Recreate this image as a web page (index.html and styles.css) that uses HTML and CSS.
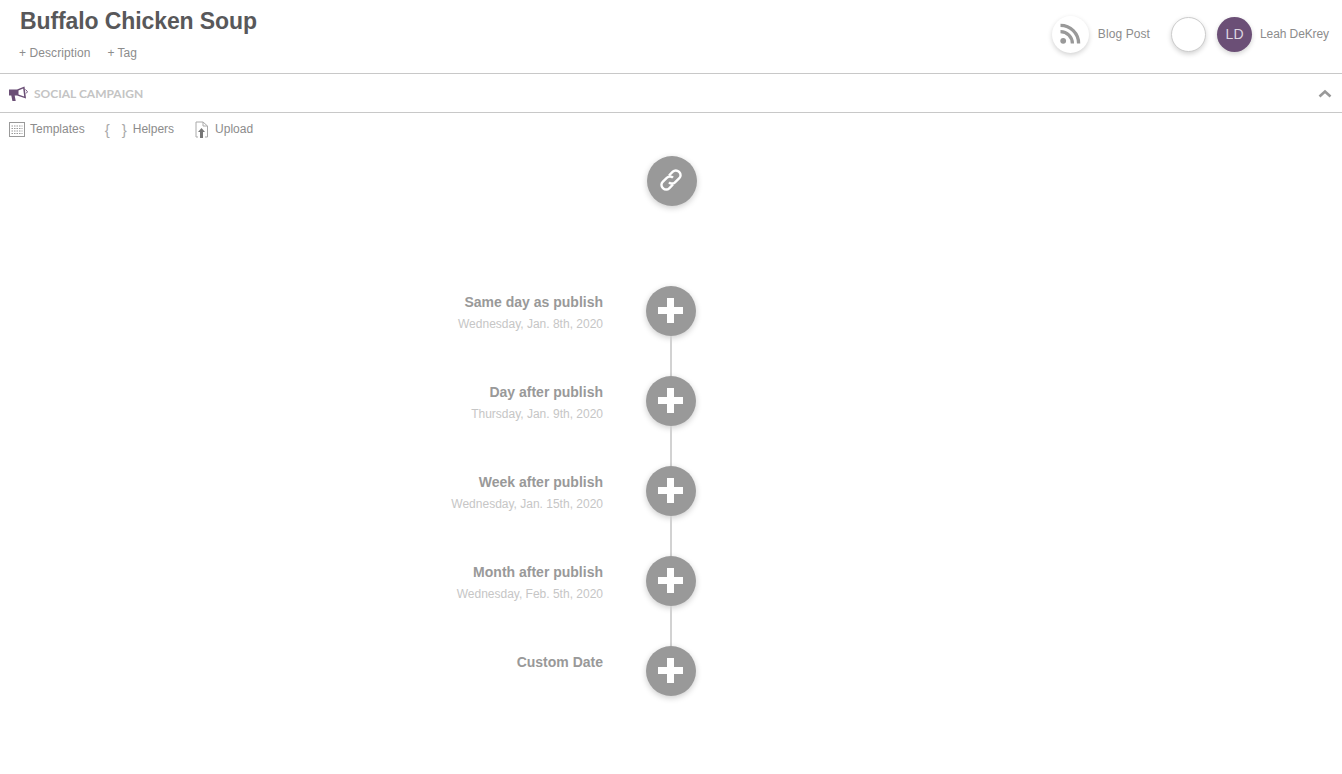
FILE: index.html
```html
<!DOCTYPE html>
<html lang="en">

<head>
    <meta charset="UTF-8">
    <meta name="viewport" content="width=device-width, initial-scale=1.0">
    <title>Buffalo Chicken Soup</title>
    <link rel="stylesheet" href="styles.css">
</head>

<body>
    <header class="top-bar">
        <div class="post-info">
            <h1>Buffalo Chicken Soup</h1>
            <div class="post-links">
                <span>+ Description</span>
                <span>+ Tag</span>
            </div>
        </div>
        <div class="post-meta">
            <div class="type-badge">
                <div class="round-btn rss">
                    <svg width="22" height="22" viewBox="0 0 22 22">
                        <circle cx="4.2" cy="17.8" r="2.9" fill="#999" />
                        <path d="M1.5 8.6a11.9 11.9 0 0 1 11.9 11.9" fill="none" stroke="#999" stroke-width="3.3" />
                        <path d="M1.5 2.4a18.1 18.1 0 0 1 18.1 18.1" fill="none" stroke="#999" stroke-width="3.3" />
                    </svg>
                </div>
                <span class="type-name">Blog Post</span>
            </div>
            <div class="round-btn empty"></div>
            <div class="avatar">LD</div>
            <span class="user-name">Leah DeKrey</span>
        </div>
    </header>

    <div class="section-bar">
        <div class="section-title">
            <svg width="19" height="17" viewBox="0 0 19 17">
                <path d="M0 4.500h8v6H5.700l1 5.500H3.400L2.300 10.500H0z" fill="#6b4f76" />
                <path d="M8 4.500 15.500 1.500 17 13.500 8 10.500z" fill="#6b4f76" />
                <path d="M9.500 5.500 14.200 3.600 15.200 11.400 9.500 9.400z" fill="#fff" />
                <path d="M16.500 4.500 18.500 6.800 17 8.500" fill="none" stroke="#6b4f76" stroke-width="1" />
            </svg>
            <span>SOCIAL CAMPAIGN</span>
        </div>
        <svg class="collapse" width="14" height="9" viewBox="0 0 14 9">
            <path d="M1.500 7.500 7 2.500l5.500 5" fill="none" stroke="#999" stroke-width="2.600" />
        </svg>
    </div>

    <div class="tools">
        <div class="tool">
            <svg width="16" height="15" viewBox="0 0 16 15">
                <rect x="0.500" y="0.500" width="15" height="14" fill="none" stroke="#999" />
                <path d="M2.500 4h11M2.500 6.500h11M2.500 9h11M2.500 11.500h11" fill="none" stroke="#999" stroke-dasharray="1.500 1" />
            </svg>
            <span>Templates</span>
        </div>
        <div class="tool">
            <span class="braces"><span>{</span><span>}</span></span>
            <span>Helpers</span>
        </div>
        <div class="tool tool-upload">
            <svg width="14" height="17" viewBox="0 0 14 17">
                <path d="M3 16H1V1h7l4.500 4v11H10M8 1v4h4.500" fill="none" stroke="#aaa" />
                <path d="M6.500 7 10 11H8V17H5v-6H3z" fill="#777" />
            </svg>
            <span>Upload</span>
        </div>
    </div>

    <main class="timeline">
        <div class="circle link-circle">
            <svg width="26" height="26" viewBox="1 1 26 26">
                <g fill="none" stroke="#fff" stroke-width="2.400">
                    <path d="M11 8.500 14.800 4.700a4.200 4.200 0 0 1 6 0l.5.500a4.200 4.200 0 0 1 0 6L17 15.300a4.200 4.200 0 0 1-6 0" />
                    <path d="M15 17.500l-3.800 3.800a4.200 4.200 0 0 1-6 0l-.5-.500a4.200 4.200 0 0 1 0-6L9 10.700a4.200 4.200 0 0 1 6 0" />
                </g>
            </svg>
        </div>

        <div class="schedule">
            <div class="row">
                <div class="row-label">
                    <h3>Same day as publish</h3>
                    <p>Wednesday, Jan. 8th, 2020</p>
                </div>
                <div class="circle plus"></div>
            </div>
            <div class="row">
                <div class="row-label">
                    <h3>Day after publish</h3>
                    <p>Thursday, Jan. 9th, 2020</p>
                </div>
                <div class="circle plus"></div>
            </div>
            <div class="row">
                <div class="row-label">
                    <h3>Week after publish</h3>
                    <p>Wednesday, Jan. 15th, 2020</p>
                </div>
                <div class="circle plus"></div>
            </div>
            <div class="row">
                <div class="row-label">
                    <h3>Month after publish</h3>
                    <p>Wednesday, Feb. 5th, 2020</p>
                </div>
                <div class="circle plus"></div>
            </div>
            <div class="row">
                <div class="row-label">
                    <h3>Custom Date</h3>
                </div>
                <div class="circle plus"></div>
            </div>
        </div>
    </main>
</body>

</html>
```

FILE: styles.css
```css
* {
    margin: 0px;
    padding: 0px;
    box-sizing: border-box;
}

body {
    background-color: #fff;
    font-family: "Liberation Sans", Arial, sans-serif;
    font-size: 12px;
    color: #8c8c8c;
    height: 774px;
    overflow: hidden;
}

.top-bar {
    display: flex;
    justify-content: space-between;
    height: 74px;
    border-bottom: 1px solid #c8c8c8;
    padding: 0 13px 0 19px;
}

.post-info h1 {
    font-size: 23px;
    line-height: 28px;
    letter-spacing: -0.1px;
    margin: 7px 0 0 1px;
    color: #58585a;
}

.post-links {
    display: flex;
    gap: 17px;
    margin-top: 11px;
    line-height: 14px;
}

.post-links span:first-child {
    letter-spacing: 0.08px;
}

.post-meta {
    display: flex;
    align-items: center;
    height: 68px;
}

.type-badge {
    display: flex;
    align-items: center;
    gap: 9px;
    margin-right: 21px;
}

.type-name {
    letter-spacing: 0.1px;
}

.user-name {
    letter-spacing: -0.1px;
}

.round-btn {
    display: flex;
    justify-content: center;
    align-items: center;
    border-radius: 50%;
    background-color: #fff;
    box-shadow: 0 2px 5px rgba(0, 0, 0, 0.18);
}

.rss {
    width: 37px;
    height: 37px;
}

.empty {
    width: 35px;
    height: 35px;
    border: 1px solid #ccc;
    margin-right: 11px;
}

.avatar {
    display: flex;
    justify-content: center;
    align-items: center;
    width: 35px;
    height: 35px;
    border-radius: 50%;
    background-color: #6b4f76;
    color: #ddd6e0;
    font-size: 14px;
    box-shadow: 0 2px 5px rgba(0, 0, 0, 0.18);
    margin-right: 8px;
}

.section-bar {
    display: flex;
    justify-content: space-between;
    align-items: center;
    height: 39px;
    border-bottom: 1px solid #c8c8c8;
    padding: 0 10px 0 9px;
}

.section-title {
    display: flex;
    align-items: center;
    gap: 6px;
}

.section-title span {
    font-family: Lato, sans-serif;
    font-weight: bold;
    font-size: 12px;
    color: #c4c4c4;
}

.tools {
    display: flex;
    align-items: center;
    gap: 20px;
    height: 32px;
    padding-left: 9px;
}

.tool {
    display: flex;
    align-items: center;
    gap: 5px;
}

.tool-upload {
    gap: 6px;
    margin-left: 1px;
}

.braces {
    display: flex;
    gap: 12px;
    font-size: 15px;
    color: #aaa;
    margin-right: 1px;
}

.timeline {
    display: flex;
    flex-direction: column;
    align-items: center;
}

.circle {
    display: flex;
    justify-content: center;
    align-items: center;
    width: 50px;
    height: 50px;
    border-radius: 50%;
    background-color: #999;
    box-shadow: 0 2px 6px rgba(0, 0, 0, 0.2);
}

.link-circle {
    margin: 11px 0 0 1px;
}

.schedule {
    width: 100%;
    margin-top: 80px;
}

.row {
    display: grid;
    grid-template-columns: 1fr 50px 1fr;
    column-gap: 42px;
    height: 90px;
}

.row-label {
    grid-column: 1;
    text-align: right;
    padding: 8px 1px 0 0;
}

.row-label h3 {
    font-size: 14px;
    line-height: 16px;
    color: #999;
}

.row-label p {
    margin-top: 7px;
    line-height: 14px;
    color: #c6c6c6;
}

.plus {
    position: relative;
}

/* plus sign */
.plus::before {
    content: "";
    width: 25px;
    height: 25px;
    margin: 0 1px 1px 0;
    background:
        linear-gradient(#fff, #fff) center / 25px 7px no-repeat,
        linear-gradient(#fff, #fff) center / 7px 25px no-repeat;
    border-radius: 2px;
}

/* line down to the next circle */
.plus::after {
    content: "";
    position: absolute;
    top: 50px;
    left: 24px;
    width: 2px;
    height: 40px;
    background-color: #d2d2d2;
}

.row:last-child .plus::after {
    display: none;
}
```
